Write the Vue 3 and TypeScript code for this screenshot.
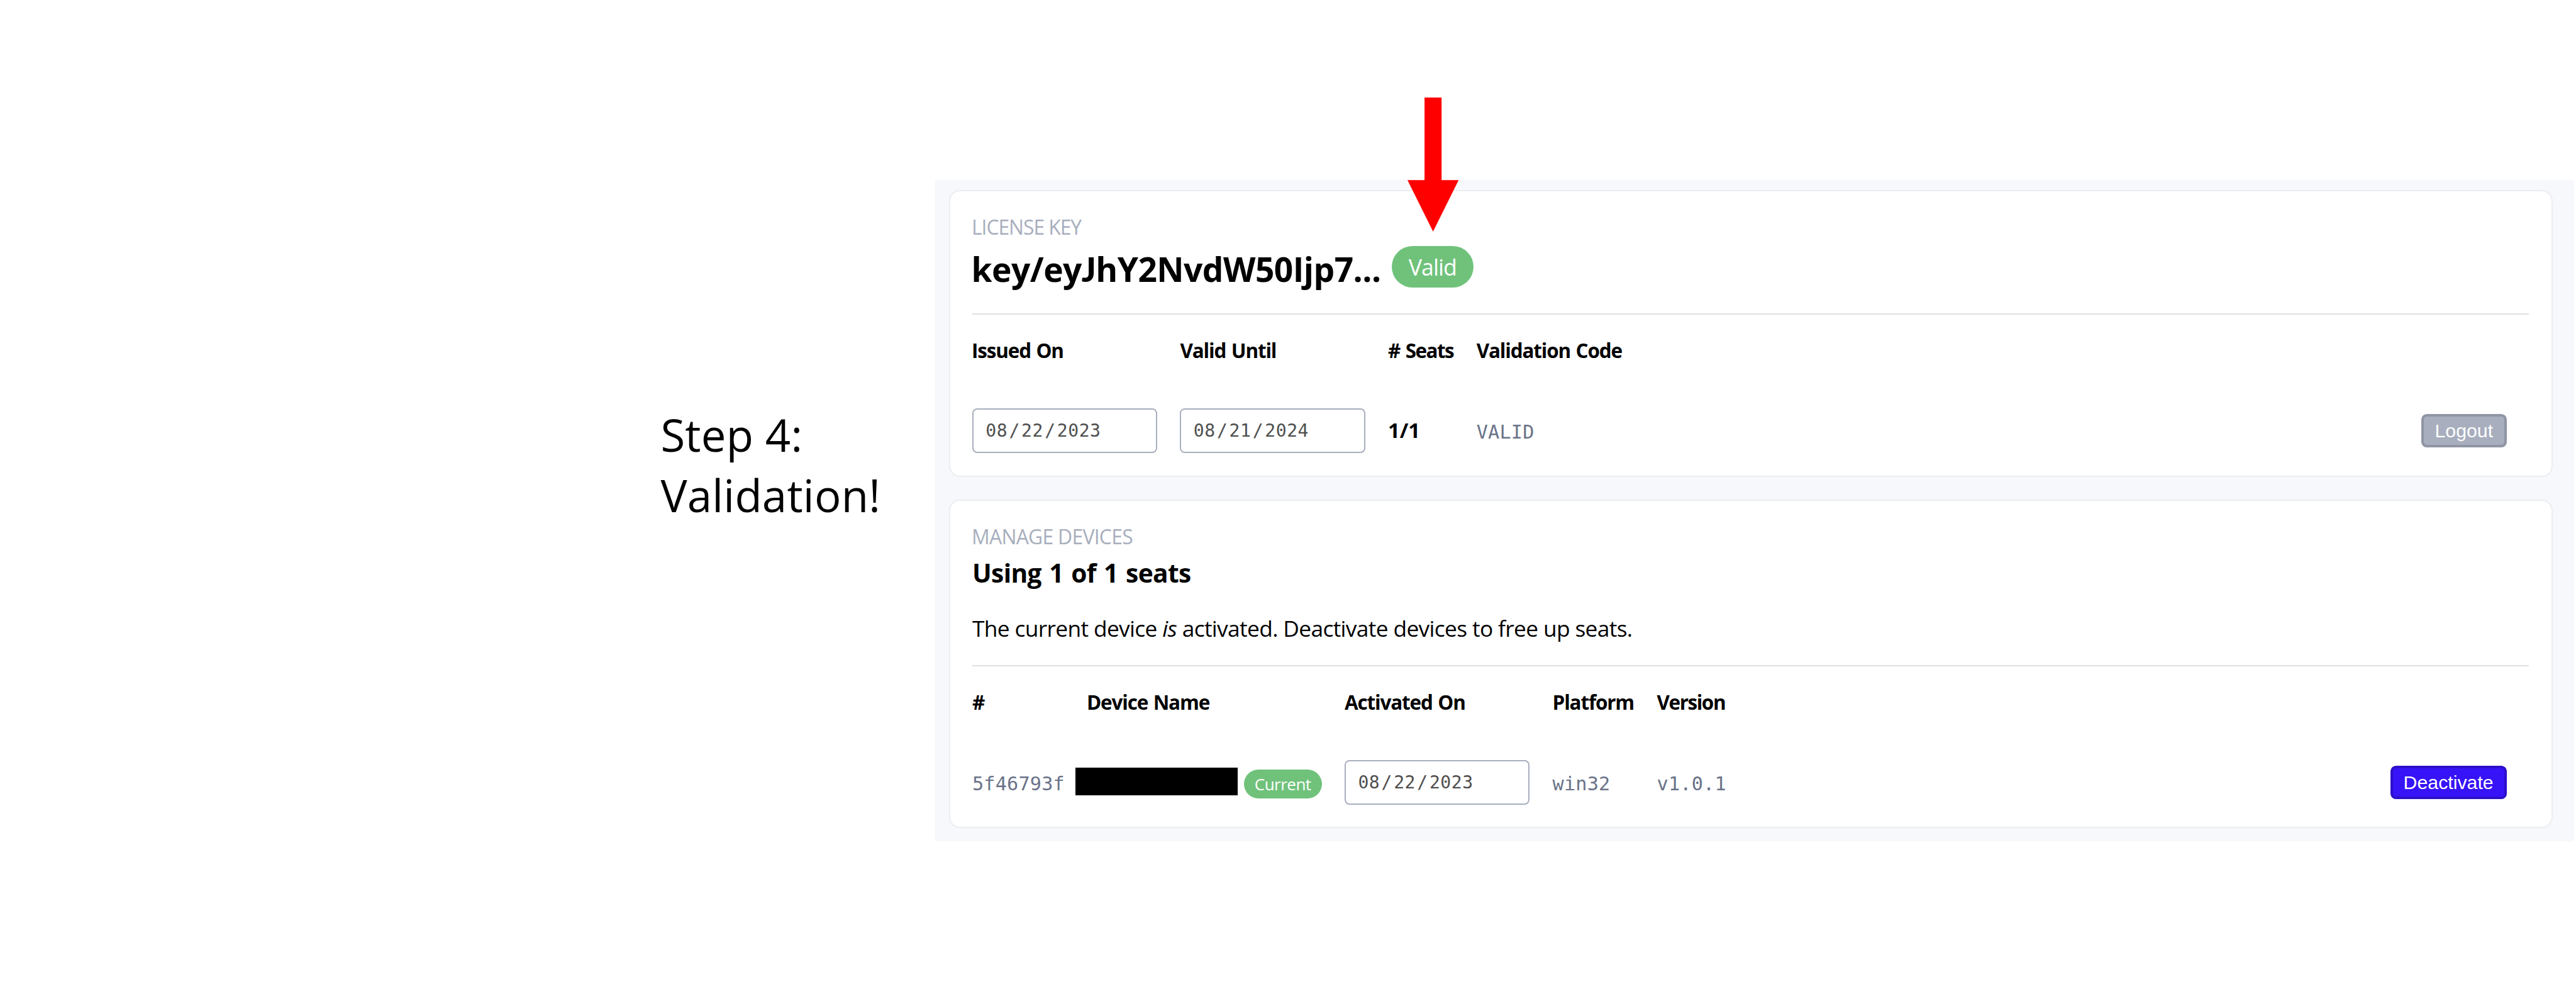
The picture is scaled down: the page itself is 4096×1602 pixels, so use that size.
<script setup lang="ts">
interface DateParts {
  month: string
  day: string
  year: string
}

const issuedOn: DateParts = { month: '08', day: '22', year: '2023' }
const validUntil: DateParts = { month: '08', day: '21', year: '2024' }
const device = { id: '5f46793f', activatedOn: issuedOn, platform: 'win32', version: 'v1.0.1' }
</script>

<template>
  <main class="slide">
    <div class="caption">
      <div>Step 4:</div>
      <div>Validation!</div>
    </div>

    <div class="panel">
      <section class="card license">
        <div class="eyebrow tight">LICENSE KEY</div>
        <div class="title-row">
          <h1 class="key">key/ey<span class="cap-j">J</span>hY2NvdW50Ijp7...</h1>
          <span class="badge badge-lg">Valid</span>
        </div>
        <div class="divider"></div>
        <div class="grid license-grid">
          <div class="th first">Issued On</div>
          <div class="th">Valid Until</div>
          <div class="th seats"># Seats</div>
          <div class="th">Validation Code</div>
          <div></div>

          <div class="date">
            {{ issuedOn.month }}<i>/</i>{{ issuedOn.day }}<i>/</i>{{ issuedOn.year }}
          </div>
          <div class="date">
            {{ validUntil.month }}<i>/</i>{{ validUntil.day }}<i>/</i>{{ validUntil.year }}
          </div>
          <div class="count">1/1</div>
          <code>VALID</code>
          <button class="btn muted" type="button">Logout</button>
        </div>
      </section>

      <section class="card devices">
        <div class="eyebrow">MANAGE DEVICES</div>
        <h2 class="usage">Using 1 of 1 seats</h2>
        <p class="note">The current device <em>is</em> activated. Deactivate devices to free up seats.</p>
        <div class="divider"></div>
        <div class="grid device-grid">
          <div class="th">#</div>
          <div class="th">Device Name</div>
          <div class="th">Activated On</div>
          <div class="th">Platform</div>
          <div class="th version">Version</div>
          <div></div>

          <code>{{ device.id }}</code>
          <div class="name">
            <span class="redacted"></span>
            <span class="badge badge-sm">Current</span>
          </div>
          <div class="date">
            {{ device.activatedOn.month }}<i>/</i>{{ device.activatedOn.day }}<i>/</i>{{ device.activatedOn.year }}
          </div>
          <code>{{ device.platform }}</code>
          <code>{{ device.version }}</code>
          <button class="btn primary" type="button">Deactivate</button>
        </div>
      </section>
    </div>

    <svg class="arrow" viewBox="0 0 84 220" aria-hidden="true">
      <path d="M28 0h28v135.5h28L42 220 0 135.5h28z" fill="#ff0000" />
    </svg>
  </main>
</template>

<style>
body {
  margin: 0;
  background: #ffffff;
  overflow: hidden;
}
</style>

<style scoped>
.slide {
  zoom: 0.96809;
  position: relative;
  display: flex;
  align-items: flex-start;
  width: 4231px;
  height: 1655px;
  background: #ffffff;
  color: #000000;
  font-family: "Open Sans", "Noto Sans", sans-serif;
}

.caption {
  flex: none;
  box-sizing: border-box;
  width: 1536px;
  padding: 664.3px 0 0 1085px;
  font-size: 73px;
  line-height: 98.7px;
  letter-spacing: 0.25px;
  white-space: nowrap;
}

.panel {
  flex: none;
  box-sizing: border-box;
  display: flex;
  flex-direction: column;
  gap: 38px;
  width: 2692px;
  height: 1086px;
  margin-top: 295px;
  padding: 17.3px 35.3px 0 22.3px;
  background: #f7f8fc;
}

.card {
  box-sizing: border-box;
  padding: 38.5px 36.7px 0 36.6px;
  border: 2.1px solid #ecedf1;
  border-radius: 18px;
  background: #ffffff;
}

.license {
  height: 470.2px;
}

.devices {
  height: 539px;
}

.eyebrow {
  color: #a8aebd;
  font-size: 33px;
  line-height: 40px;
  letter-spacing: -0.8px;
  margin-left: -1px;
}

.tight {
  letter-spacing: -1.14px;
}

.title-row {
  display: flex;
  align-items: flex-start;
  height: 110px;
  margin-top: 11.3px;
}

.key {
  flex: none;
  width: 690.5px;
  margin: 2.4px 0 0 -1.5px;
  font-size: 55px;
  font-weight: 700;
  line-height: 70px;
  letter-spacing: -0.55px;
  white-space: nowrap;
}

.cap-j {
  font-family: Lato, sans-serif;
  font-weight: 900;
}

.badge {
  flex: none;
  box-sizing: border-box;
  background: #70c27b;
  color: #ffffff;
  text-align: center;
}

.badge-lg {
  width: 134px;
  height: 68px;
  border-radius: 34px;
  font-size: 37px;
  line-height: 69px;
  letter-spacing: -1px;
}

.badge-sm {
  width: 128px;
  height: 48px;
  margin: 4px 0 0 10px;
  border-radius: 24px;
  font-size: 27px;
  line-height: 48px;
  letter-spacing: -0.6px;
}

.usage {
  margin: 11.8px 0 0;
  font-size: 42px;
  font-weight: 700;
  line-height: 56px;
  letter-spacing: -0.65px;
  word-spacing: 2.5px;
}

.note {
  margin: 37.5px 0 35.8px;
  font-size: 36.5px;
  line-height: 50px;
  letter-spacing: -0.68px;
}

.divider {
  height: 2.2px;
  background: #e0e0e0;
}

.grid {
  display: grid;
  align-items: center;
  padding: 39px 37px 0 0;
  row-gap: 74.8px;
}

.license-grid {
  grid-template-columns: 341.4px 341.3px 145.5px 1fr auto;
  grid-template-rows: 40px 73.7px;
}

.device-grid {
  grid-template-columns: 188px 423.6px 341.4px 171.5px 1fr auto;
  grid-template-rows: 40px 73.5px;
}

.th {
  font-size: 32.5px;
  font-weight: 700;
  line-height: 40px;
  letter-spacing: -1.2px;
  word-spacing: 1.6px;
  white-space: nowrap;
}

.first {
  margin-left: -1px;
}

.seats {
  letter-spacing: -1.6px;
  word-spacing: 2.5px;
}

.version {
  letter-spacing: -1.5px;
}

.date {
  box-sizing: border-box;
  width: 303.8px;
  height: 73.6px;
  padding-left: 20px;
  border: 2.1px solid #a8aebd;
  border-radius: 8px;
  color: #4f4f4f;
  font: 29px/69.4px "DejaVu Sans Mono", monospace;
  letter-spacing: 0.55px;
  white-space: nowrap;
}

.date i {
  padding: 0 2.3px;
  font-style: normal;
}

.count {
  font-size: 34px;
  font-weight: 700;
  line-height: 73px;
}

code {
  padding-top: 4.6px;
  color: #6a7389;
  font: 31.2px/60px "DejaVu Sans Mono", monospace;
  letter-spacing: 0.2px;
}

.name {
  display: flex;
  align-items: center;
  margin-left: -19px;
}

.redacted {
  flex: none;
  width: 267px;
  height: 46px;
  margin-top: -4px;
  background: #000000;
}

.btn {
  box-sizing: border-box;
  height: 54.6px;
  padding: 0;
  border: 4.2px solid;
  border-radius: 9px;
  color: #ffffff;
  font: 31.3px/45px "Liberation Sans", Arial, sans-serif;
  text-align: center;
}

.muted {
  width: 140px;
  border-color: #9095a5;
  background: #a8aebd;
  justify-self: end;
}

.primary {
  width: 191px;
  border-color: #2c10cc;
  background: #3713f7;
  justify-self: end;
}

.arrow {
  position: absolute;
  left: 2312px;
  top: 160px;
  width: 84px;
  height: 220px;
}
</style>
